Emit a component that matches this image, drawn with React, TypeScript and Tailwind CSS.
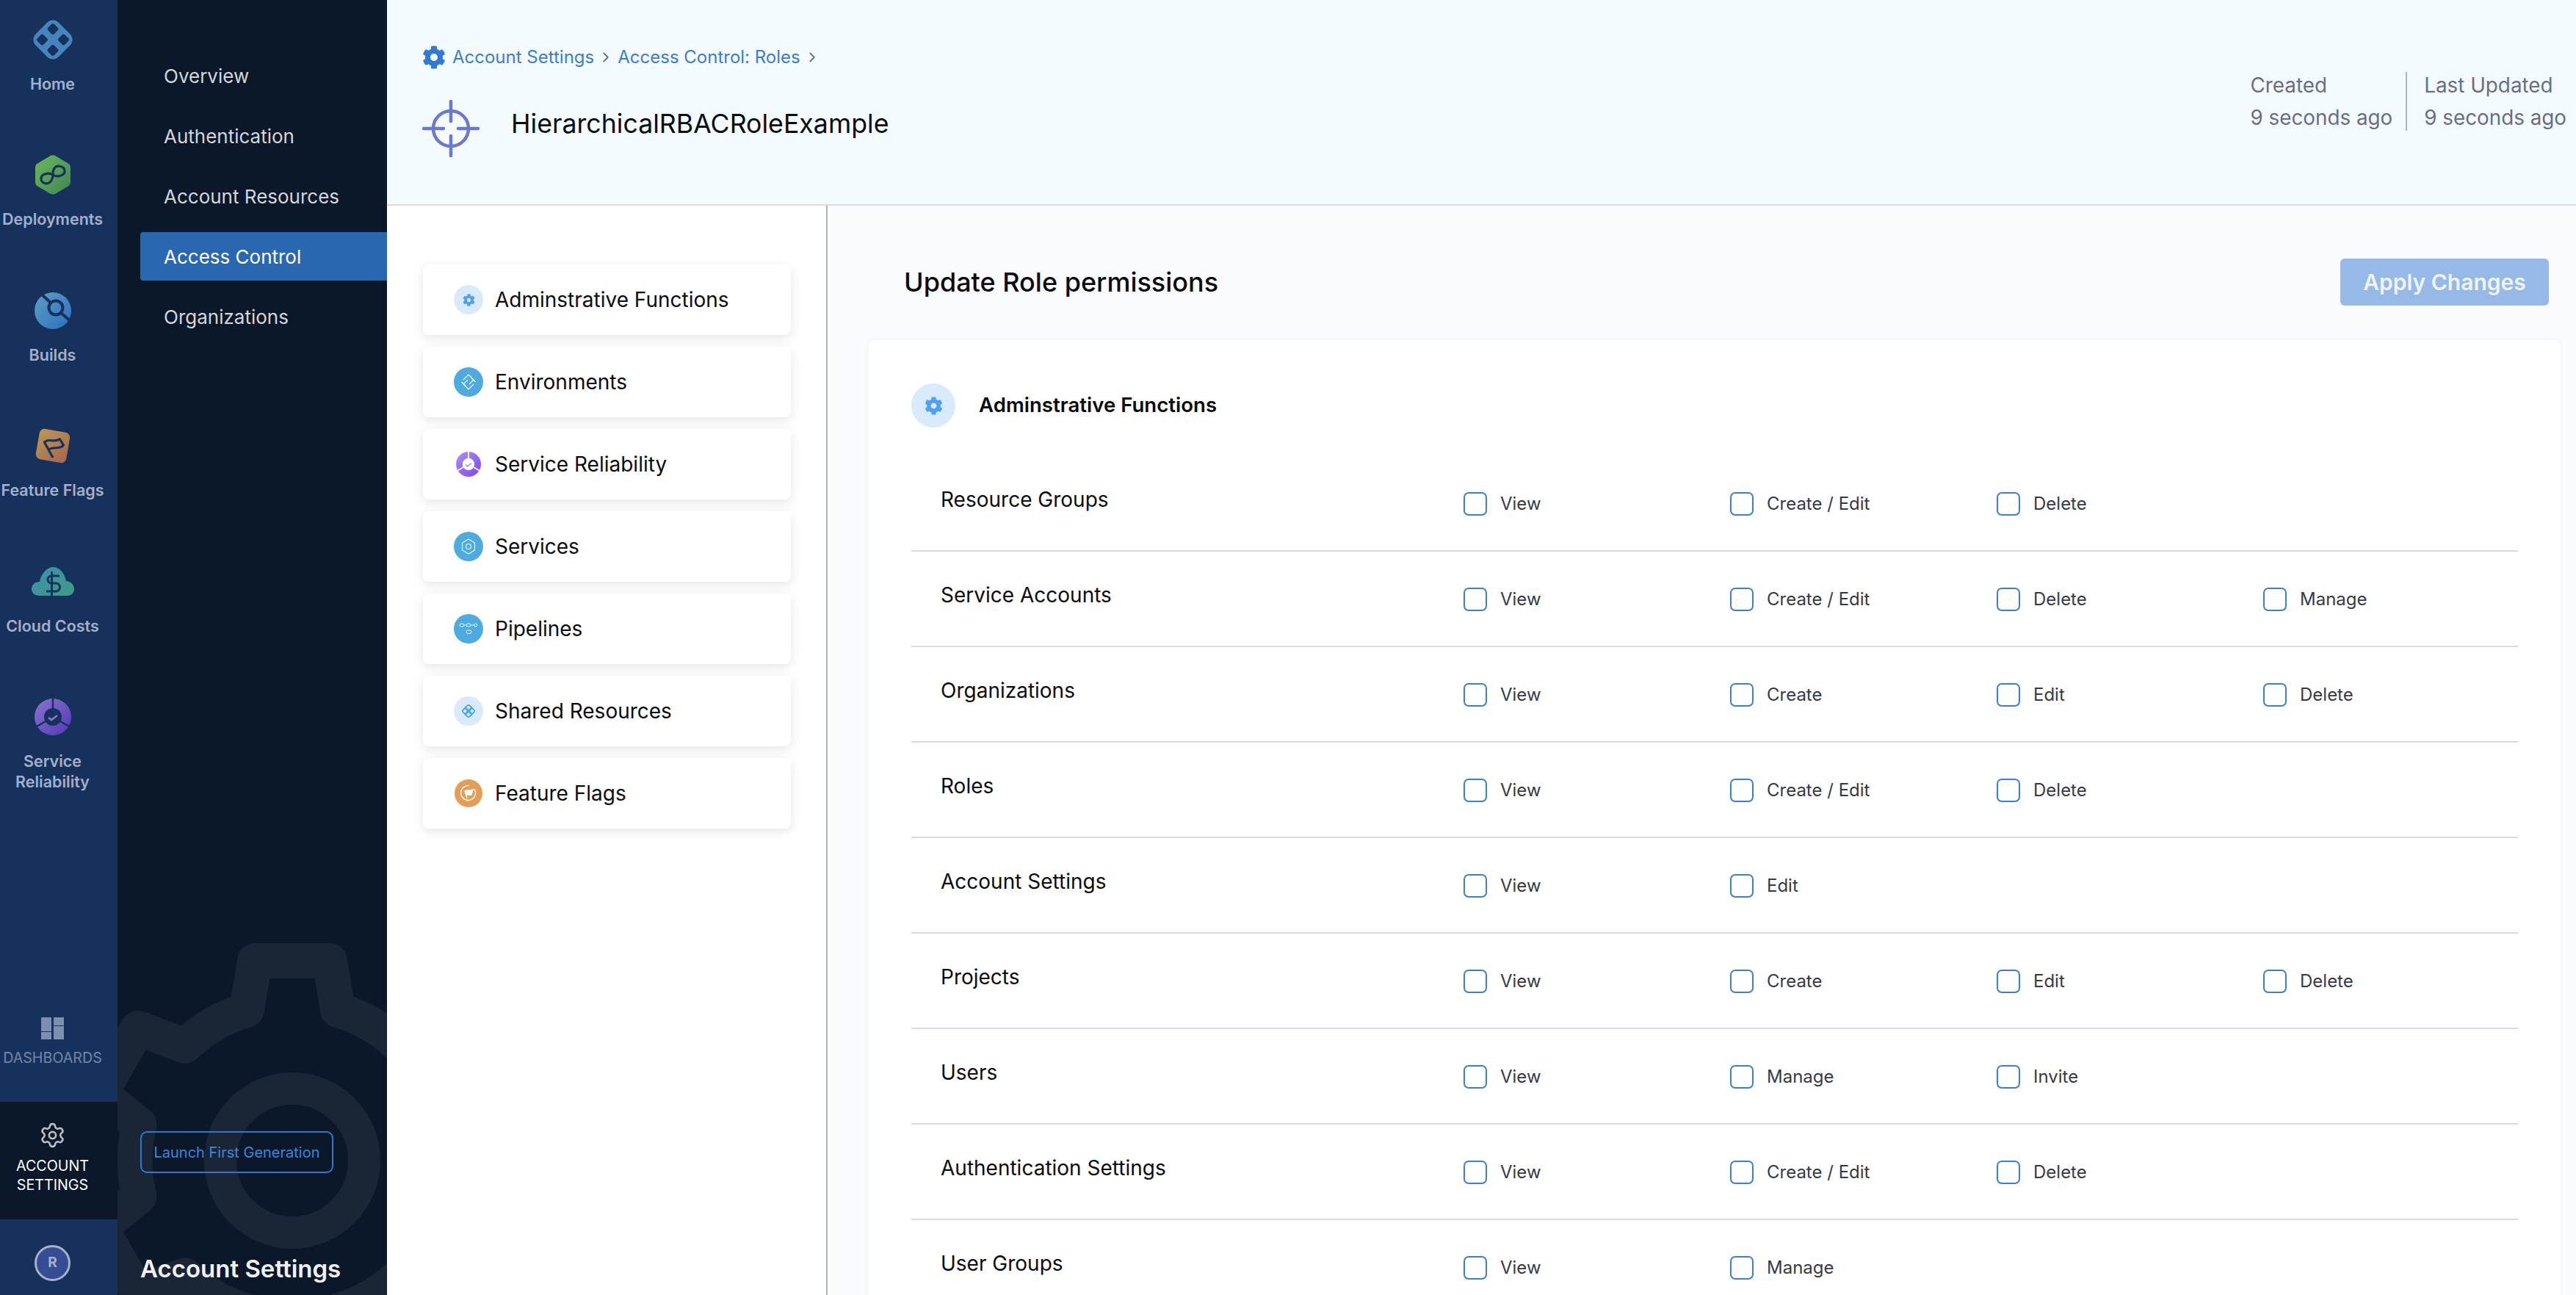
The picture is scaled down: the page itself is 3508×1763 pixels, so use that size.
import React from "react";
import { Settings, ChevronRight } from "lucide-react";
import { FaCog } from "react-icons/fa";

const railItems = ["Home", "Deployments", "Builds", "Feature Flags", "Cloud Costs", "Service Reliability"];
const subNav = ["Overview", "Authentication", "Account Resources", "Access Control", "Organizations"];
const groups = [
  "Adminstrative Functions",
  "Environments",
  "Service Reliability",
  "Services",
  "Pipelines",
  "Shared Resources",
  "Feature Flags",
];
const rows: { name: string; perms: string[] }[] = [
  { name: "Resource Groups", perms: ["View", "Create / Edit", "Delete"] },
  { name: "Service Accounts", perms: ["View", "Create / Edit", "Delete", "Manage"] },
  { name: "Organizations", perms: ["View", "Create", "Edit", "Delete"] },
  { name: "Roles", perms: ["View", "Create / Edit", "Delete"] },
  { name: "Account Settings", perms: ["View", "Edit"] },
  { name: "Projects", perms: ["View", "Create", "Edit", "Delete"] },
  { name: "Users", perms: ["View", "Manage", "Invite"] },
  { name: "Authentication Settings", perms: ["View", "Create / Edit", "Delete"] },
  { name: "User Groups", perms: ["View", "Manage"] },
];

const NAVY = "#16325c";

const HomeLogo = ({ size = 60, fill = "#4584bd", hole = NAVY }: { size?: number; fill?: string; hole?: string }) => (
  <svg width={size} height={size} viewBox="0 0 60 60">
    <rect x="8" y="8" width="44" height="44" rx="11" fill={fill} transform="rotate(45 30 30)" />
    <g fill={hole}>
      <rect x="24" y="9.5" width="12" height="12" rx="2.5" transform="rotate(45 30 15.5)" />
      <rect x="24" y="38.5" width="12" height="12" rx="2.5" transform="rotate(45 30 44.5)" />
      <rect x="9.5" y="24" width="12" height="12" rx="2.5" transform="rotate(45 15.5 30)" />
      <rect x="38.5" y="24" width="12" height="12" rx="2.5" transform="rotate(45 44.5 30)" />
    </g>
  </svg>
);

const DeployIcon = () => (
  <svg width="50" height="56" viewBox="0 0 50 56">
    <defs>
      <linearGradient id="dep" x1="0" y1="0" x2="1" y2="1">
        <stop offset="0" stopColor="#6db85e" />
        <stop offset="1" stopColor="#3d8650" />
      </linearGradient>
    </defs>
    <path d="M21 2.5a8 8 0 0 1 8 0l16 9.5a7 7 0 0 1 4 6.5v19a7 7 0 0 1-4 6.5l-16 9.5a8 8 0 0 1-8 0L5 44a7 7 0 0 1-4-6.5v-19A7 7 0 0 1 5 12z" fill="url(#dep)" />
    <path d="M25 28C31 32 41 29 41 23C41 16 31 14 27 19C25 22 25 25 25 28C25 31 24 35 21 38C16 42 9 39 9 33C9 27 19 24 25 28Z" fill="none" stroke={NAVY} strokeWidth="3.2" />
  </svg>
);

const BuildsIcon = () => (
  <svg width="50" height="50" viewBox="0 0 50 50">
    <defs>
      <linearGradient id="bld" x1="0" y1="0" x2="1" y2="1">
        <stop offset="0" stopColor="#5f9fc6" />
        <stop offset="1" stopColor="#2c6dbe" />
      </linearGradient>
    </defs>
    <circle cx="25" cy="25" r="25" fill="url(#bld)" />
    <circle cx="29" cy="21" r="9.5" fill="none" stroke={NAVY} strokeWidth="4" />
    <path d="M11 4l11 10M36 28l14 12" stroke={NAVY} strokeWidth="4" />
  </svg>
);

const FlagsIcon = () => (
  <svg width="52" height="52" viewBox="0 0 52 52">
    <defs>
      <linearGradient id="ffg" x1="0" y1="0" x2="1" y2="1">
        <stop offset="0" stopColor="#b99a55" />
        <stop offset="1" stopColor="#a8654f" />
      </linearGradient>
    </defs>
    <rect x="5" y="5" width="42" height="42" rx="7" fill="url(#ffg)" transform="rotate(10 26 26)" />
    <path d="M26 42L14.5 21c6-6 11 1 21-4l5 8c-6 7-14 1-20 6" fill="none" stroke={NAVY} strokeWidth="3.2" strokeLinejoin="round" />
  </svg>
);

const CloudIcon = () => (
  <svg width="58" height="42" viewBox="0 0 58 42">
    <defs>
      <linearGradient id="cld" x1="0" y1="0" x2="1" y2="1">
        <stop offset="0" stopColor="#3d8fae" />
        <stop offset="1" stopColor="#3f9a86" />
      </linearGradient>
    </defs>
    <path d="M11 40C4 40 0 36 0 31c0-6 5-10 11-10 2-12 11-20 18-20 9 0 16 8 18 19 6 0 11 5 11 11 0 5-4 9-10 9z" fill="url(#cld)" />
    <path d="M38 13h-11a5 5 0 0 0 0 10h6a5 5 0 0 1 0 11h-13M27.500 7v35" fill="none" stroke={NAVY} strokeWidth="3" />
  </svg>
);

const ReliabilityIcon = ({ size = 50, id = "srm", from = "#8b75cc", to = "#5436b8", gap = NAVY }: { size?: number; id?: string; from?: string; to?: string; gap?: string }) => (
  <svg width={size} height={size} viewBox="0 0 50 50">
    <defs>
      <linearGradient id={id} x1="0" y1="0" x2="1" y2="1">
        <stop offset="0" stopColor={from} />
        <stop offset="1" stopColor={to} />
      </linearGradient>
    </defs>
    <circle cx="25" cy="25" r="25" fill={`url(#${id})`} />
    <circle cx="25" cy="25" r="12" fill={gap} />
    <path d="M25 0v14M3 38l12-7M47 38l-12-7" stroke={gap} strokeWidth="2.6" />
    <path d="M19 26l4 3 8-6" fill="none" stroke={from} strokeWidth="2.6" />
  </svg>
);

const railIcons: Record<string, React.ReactNode> = {
  Home: <HomeLogo />,
  Deployments: <DeployIcon />,
  Builds: <BuildsIcon />,
  "Feature Flags": <FlagsIcon />,
  "Cloud Costs": <CloudIcon />,
  "Service Reliability": <ReliabilityIcon />,
};

// big faded gear behind the account settings panel
const gearPath = () => {
  const cx = 238;
  const cy = 297;
  const pt = (r: number, off: number, deg: number) => {
    const a = (deg * Math.PI) / 180;
    const x = off;
    const y = -r;
    return `${(cx + x * Math.cos(a) - y * Math.sin(a)).toFixed(1)} ${(cy + x * Math.sin(a) + y * Math.cos(a)).toFixed(1)}`;
  };
  let d = "";
  for (let i = 0; i < 6; i++) {
    const deg = i * 60;
    d += `${i === 0 ? "M" : "A209 209 0 0 1"} ${pt(205, -62, deg)} L ${pt(272, -51, deg)} L ${pt(272, 51, deg)} L ${pt(205, 62, deg)} `;
  }
  return `${d} A209 209 0 0 1 ${pt(205, -62, 0)} Z`;
};

const Checkbox = ({ label }: { label: string }) => (
  <div className="flex items-center gap-[18px]">
    <span className="w-[32px] h-[32px] rounded-[7px] border-2 border-[#3b7ed6] bg-white" />
    <span className="text-[24px] leading-[32px] text-[#383946]">{label}</span>
  </div>
);

const groupIcon = (name: string) => {
  switch (name) {
    case "Adminstrative Functions":
      return (
        <span className="w-[40px] h-[40px] rounded-full bg-[#d9eafb] flex items-center justify-center">
          <FaCog size={17} color="#4fa0f2" />
        </span>
      );
    case "Environments":
      return (
        <span className="w-[40px] h-[40px] rounded-full bg-[#4dabe0] flex items-center justify-center">
          <svg width="22" height="22" viewBox="0 0 22 22" fill="none" stroke="#ffffff" strokeWidth="1.1">
            <path d="M4 8l7-7 7 7-6 6" />
            <path d="M18 14l-7 7-7-7 6-6" />
            <path d="M1.500 11L7 16.500M20.500 11L15 5.500" />
          </svg>
        </span>
      );
    case "Service Reliability":
      return (
        <span className="w-[40px] h-[40px] flex items-center justify-center">
          <ReliabilityIcon size={34} id="srl" from="#b093ee" to="#7b43f2" gap="#ffffff" />
        </span>
      );
    case "Services":
      return (
        <span className="w-[40px] h-[40px] rounded-full bg-[#4dabe0] flex items-center justify-center">
          <svg width="20" height="22" viewBox="0 0 20 22" fill="none" stroke="#e6f4fb" strokeWidth="1.2">
            <path d="M10 1l8.500 5v10L10 21l-8.500-5V6z" />
            <circle cx="10" cy="11" r="3.500" />
          </svg>
        </span>
      );
    case "Pipelines":
      return (
        <span className="w-[40px] h-[40px] rounded-full bg-[#4dabe0] flex items-center justify-center">
          <svg width="26" height="16" viewBox="0 0 26 16" fill="none" stroke="#e6f4fb" strokeWidth="1">
            <rect x="1" y="1" width="6" height="4" rx="2" />
            <rect x="10" y="1" width="6" height="4" rx="2" />
            <circle cx="22.500" cy="3" r="2" />
            <path d="M7 3h3M16 3h4.500" />
            <rect x="10" y="10" width="7" height="4.500" rx="2.200" />
          </svg>
        </span>
      );
    case "Shared Resources":
      return (
        <span className="w-[40px] h-[40px] rounded-full bg-[#d9eafb] flex items-center justify-center">
          <HomeLogo size={20} fill="#4fa8e6" hole="#d9eafb" />
        </span>
      );
    default:
      return (
        <span className="w-[40px] h-[40px] flex items-center justify-center">
          <span className="w-[38px] h-[38px] rounded-full bg-[#e59c56] flex items-center justify-center">
            <svg width="24" height="24" viewBox="0 0 24 24" fill="none" stroke="#fff" strokeWidth="1.4">
              <path d="M20 6a10 10 0 1 1-7-4.500M12 22A10 10 0 0 1 4 17" />
              <path d="M10 19L7 9c4-3 6 0 11-2l-2 7c-3 1-5-1-7 0" fill="#fff" />
            </svg>
          </span>
        </span>
      );
  }
};

export default function App() {
  return (
    <div className="flex w-[3508px] h-[1763px] overflow-hidden bg-white font-['Inter',sans-serif]">
      {/* main rail */}
      <aside className="w-[160px] shrink-0 h-full bg-[#16325c] flex flex-col justify-between">
        <div className="w-[143px] pt-[24px] flex flex-col">
          {railItems.map((item) => (
            <div key={item} className="h-[184.400px] flex flex-col items-center">
              <div className="h-[60px] flex items-center justify-center">{railIcons[item]}</div>
              <span className="mt-[16px] text-[21.500px] leading-[28px] font-semibold text-[#a3b0cc] text-center w-[120px] flex justify-center">
                {item === "Service Reliability" ? (
                  <span>
                    Service
                    <br />
                    Reliability
                  </span>
                ) : (
                  <span className="whitespace-nowrap">{item}</span>
                )}
              </span>
            </div>
          ))}
        </div>
        <div className="flex flex-col">
          <div className="w-[143px] h-[115px] flex flex-col items-center">
            <svg width="31" height="30" viewBox="0 0 31 30" fill="#7c8fb0">
              <rect x="0" y="0" width="14" height="19" />
              <rect x="0" y="20" width="14" height="10" />
              <rect x="17" y="0" width="14" height="11" />
              <rect x="17" y="12" width="14" height="18" />
            </svg>
            <span className="mt-[12px] text-[19.700px] leading-[26px] text-[#7486a8]">DASHBOARDS</span>
          </div>
          <div className="h-[160px] bg-[#0b1829]">
            <div className="w-[143px] pt-[27px] flex flex-col items-center">
              <Settings size={37} color="#b9bcc4" strokeWidth={1.7} />
              <span className="mt-[10px] text-[19.700px] leading-[26px] text-white text-center">
                ACCOUNT
                <br />
                SETTINGS
              </span>
            </div>
          </div>
          <div className="w-[143px] h-[103px] pt-[35px] flex justify-center">
            <span className="w-[49px] h-[49px] rounded-full border-[3px] border-[#a9b3c8] bg-[#364c94] text-[#a9b3c8] text-[19px] font-bold flex items-center justify-center">
              R
            </span>
          </div>
        </div>
      </aside>

      {/* account settings nav */}
      <nav className="relative w-[367px] shrink-0 h-full bg-[#0b1829] overflow-hidden flex flex-col justify-between pl-[31px]">
        <svg className="absolute left-0 bottom-0" width="367" height="480" viewBox="0 0 367 480">
          <path d={gearPath()} fill="none" stroke="#1a2536" strokeWidth="48" strokeLinejoin="round" />
          <circle cx="238" cy="297" r="98" fill="none" stroke="#1a2536" strokeWidth="44" />
        </svg>
        <div className="relative pt-[70px] flex flex-col gap-[16px]">
          {subNav.map((item) => (
            <div
              key={item}
              className={`h-[66px] flex items-center pl-[32px] rounded-l-[4px] text-[26px] ${
                item === "Access Control" ? "bg-[#2a67b1] text-white" : "text-[#d4d6dc]"
              }`}
            >
              {item}
            </div>
          ))}
        </div>
        <div className="relative flex flex-col">
          <div className="w-[263px] h-[57px] rounded-[9px] border-2 border-[#3276d3] text-[20px] text-[#3a87dd] flex items-center justify-center">
            Launch First Generation
          </div>
          <div className="mt-[107px] mb-[13px] h-[46px] leading-[46px] text-[33px] font-semibold text-[#f0f2f5]">
            Account Settings
          </div>
        </div>
      </nav>

      {/* page */}
      <main className="flex-1 h-full flex flex-col min-w-0">
        <header className="h-[280px] shrink-0 bg-[#f3fbfe] border-b-2 border-[#d9dae5] flex justify-between pl-[48px] pr-[13px]">
          <div>
            <div className="pt-[62px] flex items-center text-[24px] leading-[32px] text-[#3b7dd0]">
              <FaCog size={32} color="#3279d6" />
              <span className="ml-[9px]">Account Settings</span>
              <ChevronRight size={22} color="#6b6d85" className="mx-[5px]" />
              <span>Access Control: Roles</span>
              <ChevronRight size={22} color="#6b6d85" className="mx-[5px]" />
            </div>
            <div className="mt-[42px] flex items-center">
              <svg width="78" height="78" viewBox="0 0 78 78" fill="none" stroke="#6b78cf" strokeWidth="4.500" strokeLinecap="round">
                <circle cx="39" cy="39" r="24" />
                <path d="M2 39h27M49 39h27M39 2v27M39 49v27" />
              </svg>
              <h1 className="ml-[43px] mb-[14px] text-[35.700px] leading-[44px] text-[#0b0b0d]">HierarchicalRBACRoleExample</h1>
            </div>
          </div>
          <div className="pt-[98px] flex items-start text-[27.800px] text-[#6b6d85]">
            <div className="-mt-[4px] pr-[18px] leading-[44px]">
              Created
              <br />9 seconds ago
            </div>
            <div className="w-[2px] h-[80px] bg-[#b0b1c4]" />
            <div className="-mt-[4px] pl-[23px] leading-[44px]">
              Last Updated
              <br />9 seconds ago
            </div>
          </div>
        </header>

        <div className="flex-1 flex min-h-0">
          <section className="w-[600px] shrink-0 bg-white border-r-2 border-[#b0b1c4] pl-[49px] pt-[80px] flex flex-col gap-[16px]">
            {groups.map((group) => (
              <div
                key={group}
                className="w-[501px] h-[96px] rounded-[8px] bg-white shadow-[0_4px_14px_rgba(96,97,112,0.16)] flex items-center gap-[16px] pl-[42px] text-[28px] text-[#0b0b0d]"
              >
                {groupIcon(group)}
                {group}
              </div>
            ))}
          </section>

          <section className="flex-1 min-w-0 bg-[#fafbff] flex flex-col">
            <div className="pt-[72px] pl-[104px] pr-[37px] flex items-center justify-between">
              <h2 className="text-[36px] font-medium text-[#0b0b0d]">Update Role permissions</h2>
              <button className="w-[284px] h-[64px] rounded-[6px] bg-[#97b9e8] text-[30px] font-semibold text-[#eef4fb]">
                Apply Changes
              </button>
            </div>
            <div className="mt-[47px] ml-[56px] mr-[21px] flex-1 rounded-t-[8px] bg-white shadow-[0_0_6px_rgba(96,97,112,0.08)] px-[58px] pt-[59px]">
              <div className="flex items-center gap-[32px]">
                <span className="w-[60px] h-[60px] rounded-full bg-[#d9eafb] flex items-center justify-center">
                  <FaCog size={25} color="#4fa0f2" />
                </span>
                <span className="text-[27.600px] font-semibold text-[#0b0b0d]">Adminstrative Functions</span>
              </div>
              <div className="mt-[39px]">
                {rows.map((row) => (
                  <div key={row.name} className="h-[130px] border-b-2 border-[#d9dae5] flex">
                    <div className="w-[752px] shrink-0 pl-[40px] pt-[41px] text-[28px] leading-[36px] text-[#0b0b0d]">{row.name}</div>
                    <div className="pt-[49px] grid grid-cols-[repeat(4,363px)] h-[81px] shrink-0">
                      {row.perms.map((perm) => (
                        <Checkbox key={perm} label={perm} />
                      ))}
                    </div>
                  </div>
                ))}
              </div>
            </div>
          </section>
        </div>
      </main>
    </div>
  );
}
